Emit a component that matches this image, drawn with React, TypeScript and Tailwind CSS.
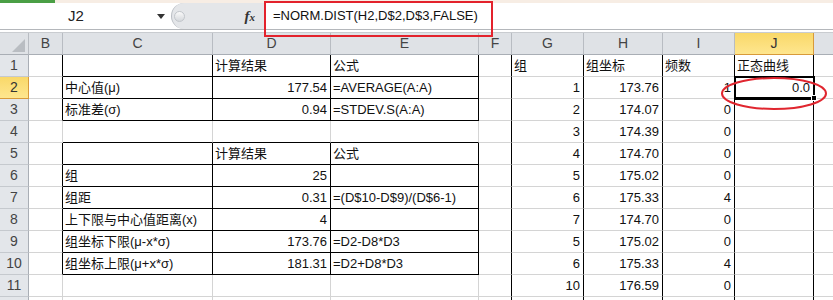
import React from "react";

type Cell = { t?: string; r?: boolean };

const FONT = "font-['Liberation_Sans','Noto_Sans_CJK_SC',sans-serif]";

const colLetters = ["", "B", "C", "D", "E", "F", "G", "H", "I", "J", ""];

// rows 1..12; cells for columns 1..10 (B..K)
const data: Record<number, Record<number, Cell>> = {
  1: { 3: { t: "计算结果" }, 4: { t: "公式" }, 6: { t: "组" }, 7: { t: "组坐标" }, 8: { t: "频数" }, 9: { t: "正态曲线" } },
  2: { 2: { t: "中心值(μ)" }, 3: { t: "177.54", r: true }, 4: { t: "=AVERAGE(A:A)" }, 6: { t: "1", r: true }, 7: { t: "173.76", r: true }, 8: { t: "1", r: true }, 9: { t: "0.0", r: true } },
  3: { 2: { t: "标准差(σ)" }, 3: { t: "0.94", r: true }, 4: { t: "=STDEV.S(A:A)" }, 6: { t: "2", r: true }, 7: { t: "174.07", r: true }, 8: { t: "0", r: true } },
  4: { 6: { t: "3", r: true }, 7: { t: "174.39", r: true }, 8: { t: "0", r: true } },
  5: { 3: { t: "计算结果" }, 4: { t: "公式" }, 6: { t: "4", r: true }, 7: { t: "174.70", r: true }, 8: { t: "0", r: true } },
  6: { 2: { t: "组" }, 3: { t: "25", r: true }, 6: { t: "5", r: true }, 7: { t: "175.02", r: true }, 8: { t: "0", r: true } },
  7: { 2: { t: "组距" }, 3: { t: "0.31", r: true }, 4: { t: "=(D$10-D$9)/(D$6-1)" }, 6: { t: "6", r: true }, 7: { t: "175.33", r: true }, 8: { t: "4", r: true } },
  8: { 2: { t: "上下限与中心值距离(x)" }, 3: { t: "4", r: true }, 6: { t: "7", r: true }, 7: { t: "174.70", r: true }, 8: { t: "0", r: true } },
  9: { 2: { t: "组坐标下限(μ-x*σ)" }, 3: { t: "173.76", r: true }, 4: { t: "=D2-D8*D3" }, 6: { t: "5", r: true }, 7: { t: "175.02", r: true }, 8: { t: "0", r: true } },
  10: { 2: { t: "组坐标上限(μ+x*σ)" }, 3: { t: "181.31", r: true }, 4: { t: "=D2+D8*D3" }, 6: { t: "6", r: true }, 7: { t: "175.33", r: true }, 8: { t: "4", r: true } },
  11: { 6: { t: "10", r: true }, 7: { t: "176.59", r: true }, 8: { t: "0", r: true } },
  12: {},
};

const tableRows = [1, 2, 3, 5, 6, 7, 8, 9, 10];

function blackRight(col: number, row: number) {
  if (col >= 1 && col <= 4 && tableRows.includes(row)) return true;
  if (col >= 5 && col <= 9) return true;
  return false;
}
function blackBottom(col: number, row: number) {
  if (col >= 2 && col <= 4 && row >= 1 && row <= 10) return true;
  if (col === 9 && row === 1) return true;
  return false;
}

export default function App() {
  const rows = Array.from({ length: 12 }, (_, i) => i + 1);
  const cols = Array.from({ length: 10 }, (_, i) => i + 1);
  return (
    <div className={`relative w-[833px] h-[300px] overflow-hidden bg-white ${FONT} text-[#111]`}>
      {/* top strip */}
      <div className="flex h-[3px]">
        <div className="w-[55px] bg-[#4a9f45]" />
        <div className="flex-1 bg-[#f7ede4]" />
      </div>
      {/* name box + formula bar */}
      <div className="flex h-[26px] bg-white">
        <div className="relative flex w-[171px] items-center">
          <div className="w-[152px] text-center text-[15px] text-[#222]">J2</div>
          <svg width="8" height="5" viewBox="0 0 8 5" className="ml-[5px]">
            <polygon points="0,0 8,0 4,5" fill="#333" />
          </svg>
        </div>
        <div className="relative flex w-[93px] items-center rounded-l-[13px] border-l border-[#b9bdc3] bg-[#e4e6e9]">
          <div className="ml-[2px] h-[11px] w-[11px] rounded-full border border-[#c2c6cb] bg-gradient-to-b from-[#fafafa] to-[#d5d8dc]" />
          <div className="ml-auto mr-[9px] font-['Liberation_Serif',serif] text-[15px] font-bold italic text-[#333]">
            f<span className="text-[11px]">x</span>
          </div>
        </div>
        <div className="flex flex-1 items-center pl-[9px] text-[13px] text-[#111]">
          =NORM.DIST(H2,D$2,D$3,FALSE)
        </div>
      </div>
      <div className="h-[4px] border-t border-b border-t-[#b4b7bb] border-b-[#c9ccd0] bg-white" />

      {/* grid */}
      <div className="grid grid-cols-[29px_34px_150px_118px_148px_33px_72px_79px_72px_79px_40px]">
        {/* column headers */}
        {colLetters.map((l, i) => {
          if (i === 0)
            return (
              <div key="corner" className="relative h-[22px] border-r border-b border-r-[#b8bcc2] border-b-[#a9aeb5] bg-[#dfe2e6]">
                <svg width="29" height="22" className="absolute left-0 top-0">
                  <polygon points="12,19 25,6 25,19" fill="#b9bdc2" />
                </svg>
              </div>
            );
          if (i === 9)
            return (
              <div key={i} className="flex h-[22px] items-center justify-center border-r border-b border-r-[#d89a3a] border-b-[#d89a3a] bg-gradient-to-b from-[#f9d868] to-[#fee68e] text-[14px] text-[#333]">
                {l}
              </div>
            );
          return (
            <div key={i} className="flex h-[22px] items-center justify-center border-r border-b border-r-[#b8bcc2] border-b-[#a9aeb5] bg-[#dfe2e6] text-[14px] text-[#444]">
              {l}
            </div>
          );
        })}
        {rows.map((r) => (
          <React.Fragment key={r}>
            {r === 2 ? (
              <div className="flex h-[22px] items-center justify-center border-r border-b border-r-[#d89a3a] border-b-[#d89a3a] bg-gradient-to-b from-[#f9d868] to-[#fee68e] text-[14px] text-[#333]">
                {r}
              </div>
            ) : (
              <div className="flex h-[22px] items-center justify-center border-r border-b border-r-[#a9aeb5] border-b-[#c5c9ce] bg-[#e3e6ea] text-[14px] text-[#444]">
                {r <= 11 ? r : ""}
              </div>
            )}
            {cols.map((c) => {
              const cell = data[r]?.[c] ?? {};
              const rc = blackRight(c, r) ? "border-r-black" : "border-r-[#d4d4d4]";
              const bc = blackBottom(c, r) ? "border-b-black" : "border-b-[#d4d4d4]";
              const al = cell.r ? "justify-end pr-[3px]" : "justify-start pl-[2px]";
              return (
                <div
                  key={c}
                  className={`flex h-[22px] items-center overflow-hidden whitespace-nowrap border-r border-b text-[13px] ${rc} ${bc} ${al}`}
                >
                  {cell.t}
                </div>
              );
            })}
          </React.Fragment>
        ))}
      </div>

      {/* selection on J2 */}
      <div className="pointer-events-none absolute left-[734px] top-[76px] h-[24px] w-[81px] border-2 border-b-[3px] border-black">
        <div className="absolute -bottom-[4px] -right-[4px] h-[6px] w-[6px] border border-white bg-black" />
      </div>

      {/* red annotation box */}
      <div className="pointer-events-none absolute left-[264px] top-[1px] h-[36px] w-[229px] border-2 border-[#e3222c]" />

      {/* red ellipse */}
      <svg className="pointer-events-none absolute left-[719px] top-[76px]" width="112" height="38" viewBox="0 0 112 38">
        <ellipse cx="55" cy="17.5" rx="52" ry="15.5" fill="none" stroke="#e0262f" strokeWidth="2" />
      </svg>
    </div>
  );
}
